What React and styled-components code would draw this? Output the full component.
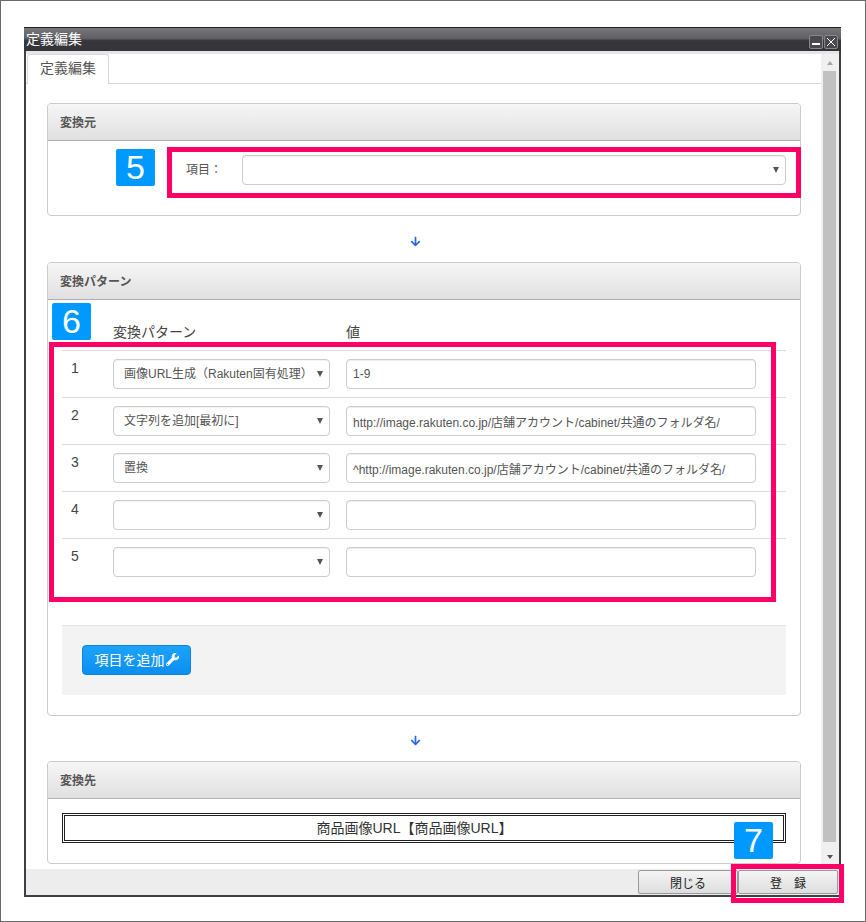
import React from 'react'
import styled, { createGlobalStyle } from 'styled-components'
import { FaWrench, FaArrowDown } from 'react-icons/fa'

const Global = createGlobalStyle`
  html, body { margin: 0; padding: 0; background: #fff; }
  body { font-family: "Liberation Sans", "Noto Sans CJK JP", sans-serif; }
  * { box-sizing: border-box; }
`

const Page = styled.div`
  position: relative;
  width: 866px;
  height: 922px;
  border: 1px solid #6a6a6a;
  padding: 26px 0 0 23px;
  overflow: hidden;
`

const Dialog = styled.div`
  width: 817px;
  height: 870px;
  display: flex;
  flex-direction: column;
  border: 2px solid #3f3f44;
  border-top: 0;
`

const TitleBar = styled.div`
  height: 24px;
  margin: 0 -2px;
  padding: 0 2px 3px 2px;
  display: flex;
  align-items: center;
  justify-content: space-between;
  border-top: 1px solid #222;
  background: linear-gradient(#77777b 0, #606064 45%, #37373b 55%, #343438 100%);
  color: #fff;
  font-size: 14px;
`

const WinButtons = styled.div`
  display: flex;
  gap: 1px;
  margin: 8px 1px 0 0;
`

const WinButton = styled.div`
  width: 14px;
  height: 14px;
  border: 1px solid #888;
  border-radius: 2px;
  background: #4a4a4e;
  display: flex;
  align-items: center;
  justify-content: center;
`

const Strip = styled.div`
  height: 3px;
  background: #e6e6e6;
`

const Main = styled.div`
  flex: 1;
  min-height: 0;
  display: flex;
`

const Content = styled.div`
  flex: 1;
  min-width: 0;
  overflow: hidden;
`

const TabRow = styled.div`
  height: 30px;
  padding-left: 1px;
  border-bottom: 1px solid #d8d8d8;
`

const Tab = styled.div`
  width: 82px;
  height: 30px;
  border: 1px solid #d8d8d8;
  border-bottom: 0;
  border-radius: 3px 3px 0 0;
  background: #fff;
  color: #555;
  font-size: 14px;
  line-height: 27px;
  text-align: center;
`

const Sections = styled.div`
  padding: 19px 20px 0 21px;
`

const Panel = styled.section`
  border: 1px solid #cbcbcb;
  border-radius: 4px;
  height: ${p => p.$height}px;
`

const PanelHead = styled.h3`
  margin: 0;
  height: 37px;
  padding: 0 12px 2px;
  display: flex;
  align-items: center;
  border-bottom: 1px solid #b0b0b0;
  border-radius: 3px 3px 0 0;
  background: linear-gradient(#f6f6f6, #e0e0e0);
  color: #555;
  font-size: 12px;
  font-weight: bold;
`

const Arrow = styled.div`
  height: ${p => p.$height}px;
  padding: 4px 18px 0 0;
  display: flex;
  align-items: center;
  justify-content: center;
  color: #2d66e6;
  font-size: 11px;
`

const SourceRow = styled.div`
  display: flex;
  align-items: center;
  padding: 14px 14px 0 138px;
`

const SourceLabel = styled.label`
  width: 56px;
  margin-bottom: 4px;
  color: #555;
  font-size: 12px;
`

const SelectWrap = styled.div`
  position: relative;
  width: ${p => p.$width};
  flex: ${p => (p.$grow ? 1 : 'none')};
  height: 30px;
  &::after {
    content: "";
    position: absolute;
    right: 7px;
    top: 12px;
    border-left: 3px solid transparent;
    border-right: 3px solid transparent;
    border-top: 6px solid #555;
    pointer-events: none;
  }
`

const Select = styled.select`
  appearance: none;
  width: 100%;
  height: 30px;
  padding: 0 20px 0 10px;
  border: 1px solid #ccc;
  border-radius: 4px;
  background: #fff;
  color: #555;
  font: 12px "Liberation Sans", "Noto Sans CJK JP", sans-serif;
  box-shadow: inset 0 1px 1px rgba(0, 0, 0, 0.05);
`

const Input = styled.input`
  width: 410px;
  height: 30px;
  padding: 0 6px;
  border: 1px solid #ccc;
  border-radius: 4px;
  background: #fff;
  color: #555;
  font: 12px "Liberation Sans", "Noto Sans CJK JP", sans-serif;
  box-shadow: inset 0 1px 1px rgba(0, 0, 0, 0.075);
`

const PatternBody = styled.div`
  padding: 0 14px;
`

const PatternHead = styled.div`
  height: 51px;
  display: grid;
  grid-template-columns: 51px 233px 1fr;
  align-items: end;
  padding-bottom: 9px;
  color: #444;
  font-size: 14px;
  line-height: 18px;
  border-bottom: 1px solid #dcdcdc;
`

const PatternRow = styled.div`
  height: ${p => (p.$first ? 46 : 47)}px;
  display: grid;
  grid-template-columns: 51px 233px 1fr;
  align-items: start;
  padding-top: 8px;
  border-top: ${p => (p.$first ? '0' : '1px solid #dcdcdc')};
`

const RowNo = styled.div`
  padding: 1px 0 0 9px;
  color: #444;
  font-size: 14px;
  line-height: 16px;
`

const Well = styled.div`
  margin-top: 40px;
  height: 70px;
  padding: 19px 20px;
  background: #f3f3f3;
  border-top: 1px solid #e3e3e3;
`

const AddButton = styled.button`
  width: 109px;
  height: 30px;
  padding: 0 0 2px;
  display: flex;
  align-items: center;
  justify-content: center;
  gap: 1px;
  border: 1px solid #0a84e0;
  border-radius: 4px;
  background: linear-gradient(#1ea3fb, #0a8ff0);
  color: #fff;
  font: 14px "Liberation Sans", "Noto Sans CJK JP", sans-serif;
`

const TargetBody = styled.div`
  padding: 14px;
`

const TargetField = styled.div`
  height: 30px;
  padding-right: 19px;
  border: 3px double #222;
  color: #333;
  font-size: 14px;
  line-height: 24px;
  text-align: center;
`

const ScrollBar = styled.div`
  width: 18px;
  padding-right: 1px;
  background: #f0f0f0;
  display: flex;
  flex-direction: column;
  align-items: center;
`

const ScrollEnd = styled.div`
  height: ${p => (p.$up ? 17 : 27)}px;
  width: 100%;
  display: flex;
  align-items: ${p => (p.$up ? 'center' : 'flex-start')};
  justify-content: center;
  padding-top: ${p => (p.$up ? 0 : 13)}px;
  &::before {
    content: "";
    border-left: 3.5px solid transparent;
    border-right: 3.5px solid transparent;
    border-top: ${p => (p.$up ? '0' : '4px solid #505050')};
    border-bottom: ${p => (p.$up ? '4px solid #a3a3a3' : '0')};
  }
`

const Thumb = styled.div`
  flex: 1;
  width: 13px;
  background: #c1c1c1;
`

const Footer = styled.div`
  height: 26px;
  padding: 1px 1px 0 0;
  display: flex;
  justify-content: flex-end;
  background: #ededed;
`

const FootButton = styled.button`
  width: 100px;
  height: 24px;
  padding: 0;
  border: 1px solid #9a9a9a;
  border-radius: 2px;
  background: linear-gradient(#f4f4f4, #dedede);
  color: #222;
  font: 12px "Liberation Sans", "Noto Sans CJK JP", sans-serif;
`

const Highlight = styled.div`
  position: absolute;
  left: ${p => p.$x}px;
  top: ${p => p.$y}px;
  width: ${p => p.$w}px;
  height: ${p => p.$h}px;
  border: 5px solid #ff0066;
  pointer-events: none;
`

const Badge = styled.div`
  position: absolute;
  left: ${p => p.$x}px;
  top: ${p => p.$y}px;
  width: 39px;
  height: 37px;
  border-radius: 2px;
  background: #0099ff;
  color: #fff;
  font-size: 34px;
  line-height: 37px;
  text-align: center;
`

const rows = [
  { option: '画像URL生成（Rakuten固有処理）', value: '1-9' },
  { option: '文字列を追加[最初に]', value: 'http://image.rakuten.co.jp/店舗アカウント/cabinet/共通のフォルダ名/' },
  { option: '置換', value: '^http://image.rakuten.co.jp/店舗アカウント/cabinet/共通のフォルダ名/' },
  { option: '', value: '' },
  { option: '', value: '' },
]

export default function App() {
  return (
    <Page>
      <Global />
      <Dialog>
        <TitleBar>
          <span>定義編集</span>
          <WinButtons>
            <WinButton>
              <svg width="8" height="8" viewBox="0 0 8 8"><path d="M0 5h8v2H0z" fill="#fff" /></svg>
            </WinButton>
            <WinButton>
              <svg width="10" height="10" viewBox="0 0 10 10"><path d="M1 1l8 8M9 1l-8 8" stroke="#fff" fill="none" /></svg>
            </WinButton>
          </WinButtons>
        </TitleBar>
        <Strip />
        <Main>
          <Content>
            <TabRow><Tab>定義編集</Tab></TabRow>
            <Sections>
              <Panel $height={113}>
                <PanelHead>変換元</PanelHead>
                <SourceRow>
                  <SourceLabel>項目：</SourceLabel>
                  <SelectWrap $grow>
                    <Select aria-label="項目"><option></option></Select>
                  </SelectWrap>
                </SourceRow>
              </Panel>
              <Arrow $height={46}><FaArrowDown /></Arrow>
              <Panel $height={454}>
                <PanelHead>変換パターン</PanelHead>
                <PatternBody>
                  <PatternHead>
                    <span />
                    <span>変換パターン</span>
                    <span>値</span>
                  </PatternHead>
                  {rows.map((row, i) => (
                    <PatternRow key={i} $first={i === 0}>
                      <RowNo>{i + 1}</RowNo>
                      <SelectWrap $width="217px">
                        <Select aria-label="変換パターン" defaultValue={row.option}>
                          <option value={row.option}>{row.option}</option>
                        </Select>
                      </SelectWrap>
                      <Input aria-label="値" defaultValue={row.value} />
                    </PatternRow>
                  ))}
                  <Well>
                    <AddButton>項目を追加<FaWrench size={13} /></AddButton>
                  </Well>
                </PatternBody>
              </Panel>
              <Arrow $height={45}><FaArrowDown /></Arrow>
              <Panel $height={103}>
                <PanelHead>変換先</PanelHead>
                <TargetBody>
                  <TargetField>商品画像URL【商品画像URL】</TargetField>
                </TargetBody>
              </Panel>
            </Sections>
          </Content>
          <ScrollBar>
            <ScrollEnd $up />
            <Thumb />
            <ScrollEnd />
          </ScrollBar>
        </Main>
        <Footer>
          <FootButton>閉じる</FootButton>
          <FootButton>登　録</FootButton>
        </Footer>
      </Dialog>
      <Highlight $x={166} $y={146} $w={634} $h={51} />
      <Highlight $x={48} $y={341} $w={727} $h={260} />
      <Highlight $x={730} $y={863} $w={113} $h={39} />
      <Badge $x={115} $y={148}>5</Badge>
      <Badge $x={51} $y={302}>6</Badge>
      <Badge $x={733} $y={821}>7</Badge>
    </Page>
  )
}
